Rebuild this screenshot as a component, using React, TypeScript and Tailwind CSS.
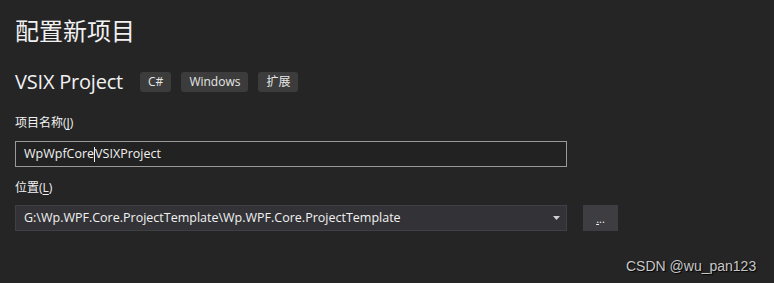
import React from "react";

const tags = ["C#", "Windows", "扩展"];

const ui = "font-['Segoe_UI','Open_Sans','Noto_Sans_CJK_SC',sans-serif]";

export default function App() {
  return (
    <div className={`relative h-[283px] w-[774px] overflow-hidden bg-[#252526] pl-[15px] text-[#f1f1f1] ${ui}`}>
      <h1 className="pt-[14px] text-[24px] leading-[34px] font-normal">配置新项目</h1>

      <div className="mt-[23px] flex h-[22px] items-center">
        <span className="text-[20px] leading-[22px] tracking-[-0.2px]">VSIX Project</span>
        <div className="ml-[17px] flex gap-[10px]">
          {tags.map((t) => (
            <span
              key={t}
              className="flex h-[20px] items-center rounded-[3px] bg-[#3c3c3c] px-[8px] text-[12px] text-[#e6e6e6]"
            >
              {t}
            </span>
          ))}
        </div>
      </div>

      <label className="mt-[21px] block text-[12px] leading-[18px]">
        项目名称(<span className="underline underline-offset-2">J</span>)
      </label>
      <div className="mt-[9px] flex h-[26px] w-[552px] items-center border border-[#999999] bg-[#222222] pl-[8px] text-[12.5px]">
        <span>WpWpfCore</span>
        <span className="h-[15px] w-px bg-[#f1f1f1]" />
        <span>VSIXProject</span>
      </div>

      <label className="mt-[12px] block text-[12px] leading-[18px]">
        位置(<span className="underline underline-offset-2">L</span>)
      </label>
      <div className="mt-[8px] flex items-center">
        <div className="flex h-[26px] w-[552px] items-center justify-between border border-[#3f3f46] bg-[#333337] pl-[8px] pr-[5px] text-[12.5px]">
          <span>G:\Wp.WPF.Core.ProjectTemplate\Wp.WPF.Core.ProjectTemplate</span>
          <svg width="7" height="4" viewBox="0 0 7 4" className="mr-[1px]">
            <path d="M0 0h7L3.5 4z" fill="#d0d0d0" />
          </svg>
        </div>
        <button
          type="button"
          className="ml-[16px] flex h-[26px] w-[35px] items-center justify-center bg-[#3e3e42] pt-[1px] text-[11px] leading-none text-[#f1f1f1]"
        >
          <span className="underline underline-offset-1">.</span>..
        </button>
      </div>

      <div className="absolute left-[626px] top-[256px] font-['Liberation_Sans',Arial,sans-serif] text-[14px] text-[#c8c8c8] [text-shadow:1px_1px_1px_#000]">
        CSDN @wu_pan123
      </div>
    </div>
  );
}
